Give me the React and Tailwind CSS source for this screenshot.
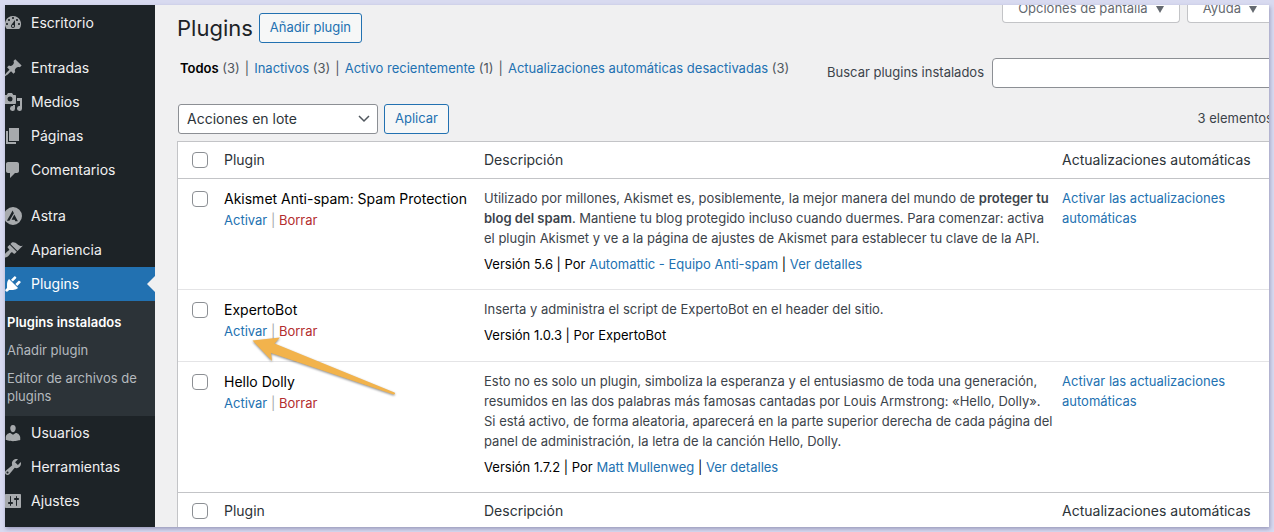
import React from "react";

const ICONS = {
  dashboard:
    "M3.76 16h12.48A7.998 7.998 0 0 0 10 3a7.998 7.998 0 0 0-6.24 13zM10 4c.55 0 1 .45 1 1s-.45 1-1 1-1-.45-1-1 .45-1 1-1zM6 6c.55 0 1 .45 1 1s-.45 1-1 1-1-.45-1-1 .45-1 1-1zm8 0c.55 0 1 .45 1 1s-.45 1-1 1-1-.45-1-1 .45-1 1-1zm-5.37 5.55L12 7v6c0 1.1-.9 2-2 2s-2-.9-2-2c0-.57.24-1.08.63-1.45zM4 10c.55 0 1 .45 1 1s-.45 1-1 1-1-.45-1-1 .45-1 1-1zm12 0c.55 0 1 .45 1 1s-.45 1-1 1-1-.45-1-1 .45-1 1-1zm-5 3c0-.55-.45-1-1-1s-1 .45-1 1 .45 1 1 1 1-.45 1-1z",
  post: "M10.44 3.02l1.82-1.82 6.36 6.35-1.83 1.82c-1.05-.68-2.48-.57-3.41.36l-.75.75c-.92.93-1.04 2.35-.35 3.41l-1.83 1.82-2.41-2.41-2.8 2.79c-.42.42-3.38 2.71-3.8 2.29s1.86-3.39 2.28-3.81l2.79-2.79L4.1 9.36l1.83-1.82c1.05.69 2.48.57 3.4-.36l.75-.75c.93-.92 1.05-2.35.36-3.41z",
  media:
    "M13 11V4c0-.55-.45-1-1-1h-1.67L9 1H5L3.67 3H2c-.55 0-1 .45-1 1v7c0 .55.45 1 1 1h10c.55 0 1-.45 1-1zM7 4.5a2.5 2.5 0 1 1 0 5 2.5 2.5 0 0 1 0-5zM14 6h5v10.5a2.5 2.5 0 1 1-2-2.45V9h-3V6zm-4 8.05V13h2v3.5a2.5 2.5 0 1 1-2-2.45z",
  page: "M6 15V2h10v13H6zm-1 1h8v2H3V5h2v11z",
  comments:
    "M5 2h9c1.1 0 2 .9 2 2v7c0 1.1-.9 2-2 2h-2l-5 5v-5H5c-1.1 0-2-.9-2-2V4c0-1.1.9-2 2-2z",
  astra:
    "M10 1a9 9 0 1 0 0 18a9 9 0 1 0 0-18zM9.6 4.6L10.9 7.2L6.4 14.8H3.9zM11.3 8.4L14.9 15.2H12.3L11.7 13.8H8.6L10 11z",
  appearance:
    "M14.48 11.06L7.41 3.99l1.5-1.5c.5-.56 2.3-.47 3.51.32 1.21.8 1.43 1.28 2.91 2.1 1.18.64 2.45 1.26 4.45.85zm-.71.71L6.7 4.7 4.93 6.47a.996.996 0 0 0 0 1.41l1.06 1.06c.39.39.39 1.03 0 1.42-.6.6-1.43 1.11-2.21 1.69-.35.26-.7.53-1.01.84C1.43 14.23.4 16.08 1.4 17.07c.99 1 2.84-.03 4.18-1.36.31-.31.58-.66.85-1.02.57-.78 1.08-1.61 1.69-2.21a.996.996 0 0 1 1.41 0l1.06 1.06c.39.39 1.02.39 1.41 0z",
  plugins:
    "M13.11 4.36L9.87 7.6 8 5.73l3.24-3.24c.35-.34 1.05-.2 1.56.32.52.51.66 1.21.31 1.55zm-8 1.77l.91-1.12 9.01 9.01-1.19.84c-.71.71-2.63 1.16-3.82 1.16H6.14L4.9 17.26c-.59.59-1.54.59-2.12 0a1.49 1.49 0 0 1 0-2.12l1.24-1.24v-3.88c0-1.13.4-3.19 1.09-3.89zm7.26 3.97l3.24-3.24c.34-.35 1.04-.21 1.55.31.52.51.66 1.21.31 1.55l-3.24 3.25z",
  users:
    "M10 9.25c-2.27 0-2.73-3.44-2.73-3.44C7 4.02 7.82 2 9.97 2c2.16 0 2.98 2.02 2.71 3.81 0 0-.41 3.44-2.68 3.44zm0 2.57L12.72 10c2.39 0 4.52 2.33 4.52 4.53v2.49s-3.65 1.13-7.24 1.13c-3.65 0-7.24-1.13-7.24-1.13v-2.49c0-2.25 1.94-4.48 4.47-4.48z",
  tools:
    "M16.68 9.77a4.543 4.543 0 0 1-4.95.99l-5.41 6.52c-.99.99-2.59.99-3.58 0s-.99-2.59 0-3.57l6.52-5.42c-.68-1.65-.35-3.61.99-4.95 1.28-1.28 3.12-1.62 4.72-1.06l-2.89 2.89 2.82 2.82 2.86-2.87c.53 1.58.18 3.39-1.08 4.65zM3.81 16.21c.4.39 1.04.39 1.43 0 .4-.4.4-1.04 0-1.43-.39-.4-1.03-.4-1.43 0a1.02 1.02 0 0 0 0 1.43z",
  settings:
    "M18 16V4c0-.55-.45-1-1-1H3c-.55 0-1 .45-1 1v12c0 .55.45 1 1 1h14c.55 0 1-.45 1-1zM8 11h1c.55 0 1 .45 1 1s-.45 1-1 1H8v1.5c0 .28-.22.5-.5.5s-.5-.22-.5-.5V13H6c-.55 0-1-.45-1-1s.45-1 1-1h1V5.5c0-.28.22-.5.5-.5s.5.22.5.5V11zm5-2h-1c-.55 0-1-.45-1-1s.45-1 1-1h1V5.5c0-.28.22-.5.5-.5s.5.22.5.5V7h1c.55 0 1 .45 1 1s-.45 1-1 1h-1v5.5c0 .28-.22.5-.5.5s-.5-.22-.5-.5V9z",
};

function MenuItem({ icon, label, active }) {
  return (
    <a
      href="#"
      className={
        active
          ? "relative flex h-[34px] items-center gap-2 bg-[#2271b1] text-sm text-white"
          : "flex h-[34px] items-center gap-2 text-sm text-[#f0f0f1]"
      }
    >
      <svg
        viewBox="0 0 20 20"
        className={active ? "-ml-0.5 size-5 shrink-0 fill-white" : "-ml-0.5 size-5 shrink-0 fill-[#a7aaad]"}
        fillRule="evenodd"
        aria-hidden="true"
      >
        <path d={ICONS[icon]} />
      </svg>
      {label}
      {active && (
        <svg viewBox="0 0 8 16" className="absolute top-[9px] right-0 h-4 w-2 fill-[#f0f0f1]" aria-hidden="true">
          <path d="M8 0v16L0 8z" />
        </svg>
      )}
    </a>
  );
}

function Sidebar() {
  return (
    <nav className="w-[150px] shrink-0 bg-[#1d2327] pt-px">
      <MenuItem icon="dashboard" label="Escritorio" />
      <div className="h-[11px]" />
      <MenuItem icon="post" label="Entradas" />
      <MenuItem icon="media" label="Medios" />
      <MenuItem icon="page" label="Páginas" />
      <MenuItem icon="comments" label="Comentarios" />
      <div className="h-3" />
      <MenuItem icon="astra" label="Astra" />
      <MenuItem icon="appearance" label="Apariencia" />
      <MenuItem icon="plugins" label="Plugins" active />
      <div className="flex flex-col bg-[#2c3338] px-0.5 pt-[7px] pb-1.5 text-[13px] leading-[18px] text-[#b4b9be]">
        <a href="#" className="py-[5px] font-semibold whitespace-nowrap text-white">Plugins instalados</a>
        <a href="#" className="py-[5px]">Añadir plugin</a>
        <a href="#" className="py-[5px]">Editor de archivos de plugins</a>
      </div>
      <MenuItem icon="users" label="Usuarios" />
      <MenuItem icon="tools" label="Herramientas" />
      <MenuItem icon="settings" label="Ajustes" />
    </nav>
  );
}

function Link({ children }) {
  return <a href="#" className="text-[#2271b1]">{children}</a>;
}

function Check({ label }) {
  return (
    <input
      type="checkbox"
      aria-label={label}
      className="block size-4 appearance-none rounded border border-[#8c8f94] bg-white"
    />
  );
}

function OutlineButton({ children }) {
  return (
    <button className="h-[30px] rounded-[3px] border border-[#2271b1] bg-[#f6f7f7] px-2.5 text-[13px] whitespace-nowrap text-[#2271b1]">
      {children}
    </button>
  );
}

function ScreenTab({ children }) {
  return (
    <button className="flex h-[30px] items-center gap-2 rounded-b border border-t-0 border-[#c3c4c7] bg-white px-[15px] pt-[3px] text-[13px] whitespace-nowrap text-[#646970]">
      {children}
      <svg viewBox="0 0 8 7" className="h-[7px] w-2 fill-current" aria-hidden="true">
        <path d="M0 0h8L4 7z" />
      </svg>
    </button>
  );
}

const FILTERS = [
  ["Inactivos", 3],
  ["Activo recientemente", 1],
  ["Actualizaciones automáticas desactivadas", 3],
];

const PLUGINS = [
  {
    name: "Akismet Anti-spam: Spam Protection",
    text: (
      <>
        Utilizado por millones, Akismet es, posiblemente, la mejor manera del mundo de{" "}
        <strong className="font-semibold">proteger tu blog del spam</strong>. Mantiene tu blog protegido incluso
        cuando duermes. Para comenzar: activa el plugin Akismet y ve a la página de ajustes de Akismet para
        establecer tu clave de la API.
      </>
    ),
    meta: (
      <>
        Versión 5.6 | Por <Link>Automattic - Equipo Anti-spam</Link> | <Link>Ver detalles</Link>
      </>
    ),
    auto: true,
  },
  {
    name: "ExpertoBot",
    text: "Inserta y administra el script de ExpertoBot en el header del sitio.",
    meta: "Versión 1.0.3 | Por ExpertoBot",
    arrow: true,
  },
  {
    name: "Hello Dolly",
    text: "Esto no es solo un plugin, simboliza la esperanza y el entusiasmo de toda una generación, resumidos en las dos palabras más famosas cantadas por Louis Armstrong: «Hello, Dolly». Si está activo, de forma aleatoria, aparecerá en la parte superior derecha de cada página del panel de administración, la letra de la canción Hello, Dolly.",
    meta: (
      <>
        Versión 1.7.2 | Por <Link>Matt Mullenweg</Link> | <Link>Ver detalles</Link>
      </>
    ),
    auto: true,
  },
];

function Arrow() {
  return (
    <svg
      viewBox="0 0 150 66"
      className="pointer-events-none absolute top-[44px] left-[36px] z-10 h-[66px] w-[150px] drop-shadow-[0_1px_1px_rgba(0,0,0,0.45)]"
      aria-hidden="true"
    >
      <path
        d="M2.5 6.500L30 3.500L24.500 9.500L144.500 58.500Q146 60 143.500 60.500L21 19L22 27Z"
        fill="#f2b34c"
      />
    </svg>
  );
}

function HeadingRow({ cell }) {
  return (
    <tr className="text-sm text-[#2c3338]">
      <td className={cell + " pl-3.5"}>
        <Check label="Seleccionar todos" />
      </td>
      <th className={cell + " px-2.5 text-left font-normal"}>Plugin</th>
      <th className={cell + " px-2.5 text-left font-normal"}>Descripción</th>
      <th className={cell + " pr-2.5 pl-2 text-left font-normal whitespace-nowrap"}>Actualizaciones automáticas</th>
    </tr>
  );
}

export default function App() {
  return (
    <div className="flex h-screen bg-[#d8daf0] p-[5px] font-['Inter','Liberation_Sans',sans-serif] text-[13px] text-[#3c434a]">
      <div className="flex min-w-0 flex-1 overflow-hidden bg-[#f0f0f1] shadow-[1px_2px_4px_rgba(60,60,110,0.4)]">
        <Sidebar />
        <main className="-mr-4 min-w-0 flex-1 pl-[22px]">
          <div className="flex items-start justify-between pr-3">
            <div className="flex items-center gap-1.5 pt-2">
              <h1 className="text-[22px] leading-[30px] text-[#1d2327]">Plugins</h1>
              <OutlineButton>Añadir plugin</OutlineButton>
            </div>
            <div className="-mt-3 flex gap-[7px]">
              <ScreenTab>Opciones de pantalla</ScreenTab>
              <ScreenTab>Ayuda</ScreenTab>
            </div>
          </div>

          <div className="flex items-start justify-between pt-[15px]">
            <ul className="flex gap-[5px] pl-[3px] leading-5 whitespace-nowrap text-[#50575e]">
              <li>
                <a href="#" className="font-semibold text-black">Todos</a> (3)
              </li>
              {FILTERS.map(([label, count]) => (
                <li key={label} className="flex gap-[5px]">
                  <span>|</span>
                  <span>
                    <Link>{label}</Link> ({count})
                  </span>
                </li>
              ))}
            </ul>
            <div className="flex items-center gap-2">
              <label htmlFor="search" className="whitespace-nowrap">Buscar plugins instalados</label>
              <input
                id="search"
                type="search"
                className="h-[30px] w-[293px] rounded border border-[#8c8f94] bg-white px-2"
              />
            </div>
          </div>

          <div className="flex items-center justify-between pt-4 pb-[7px]">
            <div className="flex gap-1.5 pl-px">
              <div className="relative flex">
                <select
                  aria-label="Acciones en lote"
                  className="h-[30px] w-[200px] appearance-none rounded-[3px] border border-[#8c8f94] bg-white pr-6 pl-2 text-sm text-[#2c3338]"
                >
                  <option>Acciones en lote</option>
                </select>
                <svg
                  viewBox="0 0 12 8"
                  className="pointer-events-none absolute top-[11px] right-2 h-2 w-3 fill-none stroke-[#50575e] stroke-[1.5]"
                  aria-hidden="true"
                >
                  <path d="M1 1l5 5 5-5" />
                </svg>
              </div>
              <OutlineButton>Aplicar</OutlineButton>
            </div>
            <span className="pr-3">3 elementos</span>
          </div>

          <table className="w-full table-fixed border-separate border-spacing-0 border border-[#c3c4c7] bg-white">
            <colgroup>
              <col className="w-9" />
              <col className="w-[260px]" />
              <col />
              <col className="w-[230px]" />
            </colgroup>
            <thead>
              <HeadingRow cell="h-[37px] border-b border-[#c3c4c7]" />
            </thead>
            <tbody className="leading-5">
              {PLUGINS.map((p, i) => {
                const line = i < PLUGINS.length - 1 ? "border-b border-[#e4e4e6] " : "";
                return (
                  <tr key={p.name} className="align-top">
                    <td className={line + "pt-3 pl-3.5"}>
                      <Check label={"Seleccionar " + p.name} />
                    </td>
                    <td className={line + "relative px-2.5 pt-2.5"}>
                      <div className="text-sm leading-5 whitespace-nowrap text-black">{p.name}</div>
                      <div className="mt-px text-[#a7aaad]">
                        <Link>Activar</Link> | <a href="#" className="text-[#b32d2e]">Borrar</a>
                      </div>
                      {p.arrow && <Arrow />}
                    </td>
                    <td className={line + "h-[72px] pt-[9px] pb-[15px] pl-2.5"}>
                      <p>{p.text}</p>
                      <p className="mt-1.5 text-black">{p.meta}</p>
                    </td>
                    <td className={line + "pt-[9px] pr-2.5 pl-2"}>
                      {p.auto && (
                        <a href="#" className="block w-[180px] text-[#2271b1]">
                          Activar las actualizaciones automáticas
                        </a>
                      )}
                    </td>
                  </tr>
                );
              })}
            </tbody>
            <tfoot>
              <HeadingRow cell="h-[37px] border-t border-[#c3c4c7]" />
            </tfoot>
          </table>
        </main>
      </div>
    </div>
  );
}
